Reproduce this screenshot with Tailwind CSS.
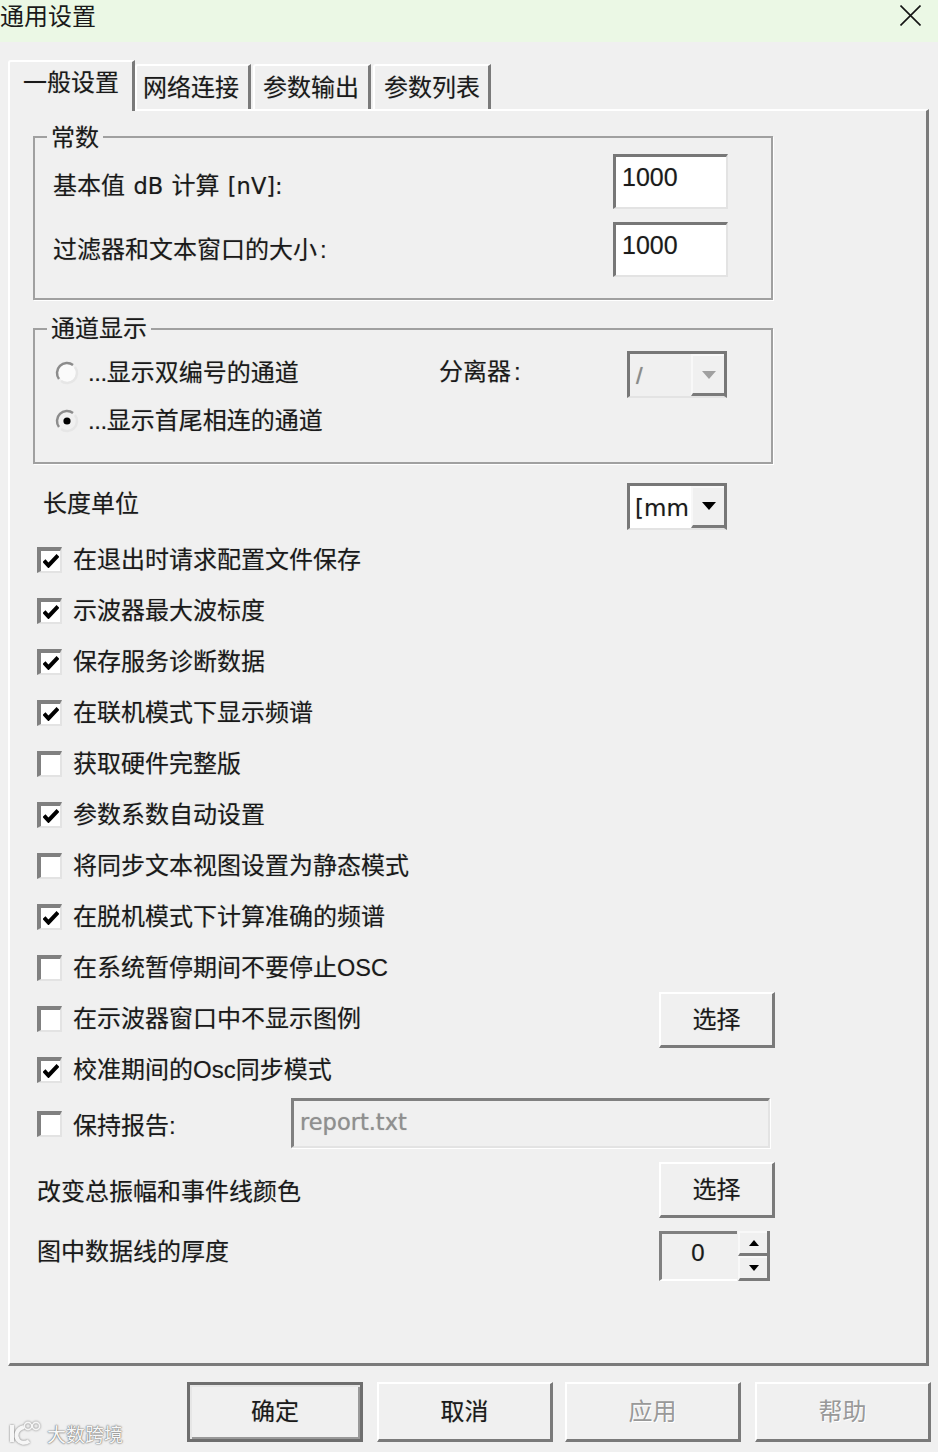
<!DOCTYPE html>
<html lang="zh-CN">
<head>
    <meta charset="UTF-8">
    <meta name="viewport" content="width=device-width, initial-scale=1.0">
    <title>通用设置</title>
    <script src="https://cdn.jsdelivr.net/npm/@tailwindcss/browser@4"></script>
</head>
<body class="bg-[#f0f0f0] text-[#1a1a1a] text-[24px] leading-[30px] font-['Liberation_Sans','Noto_Sans_CJK_SC',sans-serif] [text-shadow:0_0_1px_rgba(0,0,0,0.3)] w-[938px] h-[1452px] overflow-hidden">

    <!-- title bar -->
    <div class="h-[42px] bg-[#ebf8e5] flex items-start justify-between">
        <div class="mt-[2px] [text-shadow:none]">通用设置</div>
        <svg class="mt-[5px] mr-[17px]" width="21" height="21" viewBox="0 0 21 21" fill="none" stroke="#151515" stroke-width="1.6"><path d="M0.5 0.5L20.5 20.5M20.5 0.5L0.5 20.5"/></svg>
    </div>

    <!-- tabs -->
    <div class="flex items-end h-[67px] pl-[8px]">
        <div class="relative z-10 -mb-[2px] w-[127px] h-[51px] pl-[13px] pt-[6px] bg-[#f0f0f0] border-t-2 border-l-2 border-t-white border-l-white border-r-[3px] border-r-[#7a7a7a] rounded-tl-[3px]">一般设置</div>
        <div class="w-[116px] h-[45px] pl-[6px] pt-[7px] border-t-2 border-l-2 border-t-white border-l-white border-r-[3px] border-r-[#7a7a7a] rounded-tl-[3px]">网络连接</div>
        <div class="ml-[2px] w-[118px] h-[45px] pl-[8px] pt-[7px] border-t-2 border-l-2 border-t-white border-l-white border-r-[3px] border-r-[#7a7a7a] rounded-tl-[3px]">参数输出</div>
        <div class="ml-[2px] w-[118px] h-[45px] pl-[9px] pt-[7px] border-t-2 border-l-2 border-t-white border-l-white border-r-[3px] border-r-[#7a7a7a] rounded-tl-[3px]">参数列表</div>
    </div>

    <!-- tab panel -->
    <div class="ml-[8px] w-[921px] h-[1257px] border-t-2 border-l-2 border-t-white border-l-white border-r-[3px] border-b-[3px] border-r-[#7a7a7a] border-b-[#7a7a7a]">

        <!-- 常数 -->
        <div class="relative mt-[25px] ml-[23px] w-[740px] h-[164px] border-2 border-[#a0a0a0] shadow-[1px_1px_0_#fff] pl-[18px] pr-[43px] pt-[16px] flex flex-col gap-[14px]">
            <div class="absolute left-[12px] -top-[15px] px-[4px] bg-[#f0f0f0]">常数</div>
            <div class="flex items-center justify-between h-[54px]">
                <span class="mt-[9px] [word-spacing:1.7px]">基本值 <span class="font-['DejaVu_Sans',sans-serif] text-[22.5px]">dB</span> 计算 <span class="font-['DejaVu_Sans',sans-serif] text-[22.5px]">[nV]:</span></span>
                <div class="w-[115px] h-[55px] bg-white pl-[6px] border-t-[3px] border-l-[3px] border-t-[#777] border-l-[#777] border-r-2 border-b-2 border-r-[#e3e3e3] border-b-[#e3e3e3] text-[25px] leading-[40px]">1000</div>
            </div>
            <div class="flex items-center justify-between h-[54px]">
                <span class="mt-[1px]">过滤器和文本窗口的大小<span class="pl-[3px]">:</span></span>
                <div class="w-[115px] h-[55px] bg-white pl-[6px] border-t-[3px] border-l-[3px] border-t-[#777] border-l-[#777] border-r-2 border-b-2 border-r-[#e3e3e3] border-b-[#e3e3e3] text-[25px] leading-[40px]">1000</div>
            </div>
        </div>

        <!-- 通道显示 -->
        <div class="relative mt-[28px] ml-[23px] w-[740px] h-[136px] border-2 border-[#a0a0a0] shadow-[1px_1px_0_#fff] pl-[20px] pr-[44px] pt-[19px] flex">
            <div class="absolute left-[12px] -top-[16px] px-[4px] bg-[#f0f0f0]">通道显示</div>
            <div class="w-[384px] flex flex-col">
                <div class="flex items-center h-[48px] gap-[9px]">
                    <svg width="24" height="24" viewBox="0 0 24 24" fill="none" stroke-width="2.5"><circle cx="12" cy="12" r="9" fill="#fbfbfb"/><path d="M4 18A10 10 0 0 1 18 4" stroke="#8c8c8c"/><path d="M20 6A10 10 0 0 1 6 20" stroke="#e6e6e6"/></svg>
                    <span><span class="tracking-[-0.4px]">...</span>显示双编号的通道</span>
                </div>
                <div class="flex items-center h-[48px] gap-[9px]">
                    <svg width="24" height="24" viewBox="0 0 24 24" fill="none" stroke-width="2.5"><circle cx="12" cy="12" r="9" fill="#f0f0f0"/><path d="M4 18A10 10 0 0 1 18 4" stroke="#8c8c8c"/><path d="M20 6A10 10 0 0 1 6 20" stroke="#e6e6e6"/><circle cx="12" cy="12" r="3.6" fill="#000"/></svg>
                    <span><span class="tracking-[-0.4px]">...</span>显示首尾相连的通道</span>
                </div>
            </div>
            <div class="flex items-start justify-between flex-1">
                <span class="mt-[8px]">分离器<span class="pl-[3px]">:</span></span>
                <div class="mt-[2px] w-[100px] h-[47px] flex justify-between bg-[#f0f0f0] border-t-[3px] border-l-[3px] border-t-[#777] border-l-[#777] border-r-[3px] border-r-[#777] border-b-2 border-b-[#e3e3e3]">
                    <span class="pl-[6px] pt-[7px] text-[#8a8a8a]">/</span>
                    <div class="w-[33px] h-[42px] flex items-center justify-center border-t-2 border-l-2 border-t-[#f8f8f8] border-l-[#f8f8f8] border-b-[3px] border-b-[#7a7a7a]">
                        <svg width="14" height="8" viewBox="0 0 14 8"><path d="M0 0H14L7 8Z" fill="#a0a0a0"/></svg>
                    </div>
                </div>
            </div>
        </div>

        <!-- options -->
        <div class="ml-[27px] w-[738px]">
            <div class="mt-[19px] h-[46px] flex items-center justify-between pl-[6px] pr-[48px]">
                <span class="-mt-[4px]">长度单位</span>
                <div class="w-[100px] h-[47px] flex justify-between bg-white border-t-[3px] border-l-[3px] border-t-[#777] border-l-[#777] border-r-[3px] border-r-[#777] border-b-2 border-b-[#e3e3e3]">
                    <span class="w-[60px] overflow-hidden pl-[5px] pt-[7px] whitespace-nowrap font-['DejaVu_Sans',sans-serif] text-[23px]">[mm]</span>
                    <div class="w-[33px] h-[42px] bg-[#f0f0f0] flex items-center justify-center border-t-2 border-l-2 border-t-[#f8f8f8] border-l-[#f8f8f8] border-b-[3px] border-b-[#7a7a7a]">
                        <svg width="14" height="8" viewBox="0 0 14 8"><path d="M0 0H14L7 8Z" fill="#000"/></svg>
                    </div>
                </div>
            </div>

            <div class="mt-[5px] flex flex-col">
                <div class="h-[51px] flex items-center gap-[11px]">
                    <div class="w-[25px] h-[26px] bg-white flex items-center justify-center border-t-4 border-l-4 border-t-[#808080] border-l-[#808080] border-r-2 border-b-2 border-r-[#e3e3e3] border-b-[#e3e3e3]"><svg width="16" height="14" viewBox="0 0 16 14"><path d="M1 6.5L5.5 11.5L15 1.5" fill="none" stroke="#000" stroke-width="4"/></svg></div>
                    <span>在退出时请求配置文件保存</span>
                </div>
                <div class="h-[51px] flex items-center gap-[11px]">
                    <div class="w-[25px] h-[26px] bg-white flex items-center justify-center border-t-4 border-l-4 border-t-[#808080] border-l-[#808080] border-r-2 border-b-2 border-r-[#e3e3e3] border-b-[#e3e3e3]"><svg width="16" height="14" viewBox="0 0 16 14"><path d="M1 6.5L5.5 11.5L15 1.5" fill="none" stroke="#000" stroke-width="4"/></svg></div>
                    <span>示波器最大波标度</span>
                </div>
                <div class="h-[51px] flex items-center gap-[11px]">
                    <div class="w-[25px] h-[26px] bg-white flex items-center justify-center border-t-4 border-l-4 border-t-[#808080] border-l-[#808080] border-r-2 border-b-2 border-r-[#e3e3e3] border-b-[#e3e3e3]"><svg width="16" height="14" viewBox="0 0 16 14"><path d="M1 6.5L5.5 11.5L15 1.5" fill="none" stroke="#000" stroke-width="4"/></svg></div>
                    <span>保存服务诊断数据</span>
                </div>
                <div class="h-[51px] flex items-center gap-[11px]">
                    <div class="w-[25px] h-[26px] bg-white flex items-center justify-center border-t-4 border-l-4 border-t-[#808080] border-l-[#808080] border-r-2 border-b-2 border-r-[#e3e3e3] border-b-[#e3e3e3]"><svg width="16" height="14" viewBox="0 0 16 14"><path d="M1 6.5L5.5 11.5L15 1.5" fill="none" stroke="#000" stroke-width="4"/></svg></div>
                    <span>在联机模式下显示频谱</span>
                </div>
                <div class="h-[51px] flex items-center gap-[11px]">
                    <div class="w-[25px] h-[26px] bg-white border-t-4 border-l-4 border-t-[#808080] border-l-[#808080] border-r-2 border-b-2 border-r-[#e3e3e3] border-b-[#e3e3e3]"></div>
                    <span>获取硬件完整版</span>
                </div>
                <div class="h-[51px] flex items-center gap-[11px]">
                    <div class="w-[25px] h-[26px] bg-white flex items-center justify-center border-t-4 border-l-4 border-t-[#808080] border-l-[#808080] border-r-2 border-b-2 border-r-[#e3e3e3] border-b-[#e3e3e3]"><svg width="16" height="14" viewBox="0 0 16 14"><path d="M1 6.5L5.5 11.5L15 1.5" fill="none" stroke="#000" stroke-width="4"/></svg></div>
                    <span>参数系数自动设置</span>
                </div>
                <div class="h-[51px] flex items-center gap-[11px]">
                    <div class="w-[25px] h-[26px] bg-white border-t-4 border-l-4 border-t-[#808080] border-l-[#808080] border-r-2 border-b-2 border-r-[#e3e3e3] border-b-[#e3e3e3]"></div>
                    <span>将同步文本视图设置为静态模式</span>
                </div>
                <div class="h-[51px] flex items-center gap-[11px]">
                    <div class="w-[25px] h-[26px] bg-white flex items-center justify-center border-t-4 border-l-4 border-t-[#808080] border-l-[#808080] border-r-2 border-b-2 border-r-[#e3e3e3] border-b-[#e3e3e3]"><svg width="16" height="14" viewBox="0 0 16 14"><path d="M1 6.5L5.5 11.5L15 1.5" fill="none" stroke="#000" stroke-width="4"/></svg></div>
                    <span>在脱机模式下计算准确的频谱</span>
                </div>
                <div class="h-[51px] flex items-center gap-[11px]">
                    <div class="w-[25px] h-[26px] bg-white border-t-4 border-l-4 border-t-[#808080] border-l-[#808080] border-r-2 border-b-2 border-r-[#e3e3e3] border-b-[#e3e3e3]"></div>
                    <span>在系统暂停期间不要停止<span class="text-[23.5px]">OSC</span></span>
                </div>
                <div class="h-[51px] flex items-center gap-[11px]">
                    <div class="w-[25px] h-[26px] bg-white border-t-4 border-l-4 border-t-[#808080] border-l-[#808080] border-r-2 border-b-2 border-r-[#e3e3e3] border-b-[#e3e3e3]"></div>
                    <span>在示波器窗口中不显示图例</span>
                    <div class="ml-auto self-start -mt-[1px] w-[116px] h-[56px] shrink-0 flex items-center justify-center border-t-2 border-l-2 border-t-white border-l-white border-r-[3px] border-b-[3px] border-r-[#7a7a7a] border-b-[#7a7a7a]">选择</div>
                </div>
                <div class="h-[51px] flex items-center gap-[11px]">
                    <div class="w-[25px] h-[26px] bg-white flex items-center justify-center border-t-4 border-l-4 border-t-[#808080] border-l-[#808080] border-r-2 border-b-2 border-r-[#e3e3e3] border-b-[#e3e3e3]"><svg width="16" height="14" viewBox="0 0 16 14"><path d="M1 6.5L5.5 11.5L15 1.5" fill="none" stroke="#000" stroke-width="4"/></svg></div>
                    <span>校准期间的Osc同步模式</span>
                </div>
            </div>

            <div class="mt-[3px] h-[50px] flex items-center">
                <div class="mt-[2px] w-[25px] h-[26px] bg-white border-t-4 border-l-4 border-t-[#808080] border-l-[#808080] border-r-2 border-b-2 border-r-[#e3e3e3] border-b-[#e3e3e3]"></div>
                <span class="ml-[11px] mt-[5px]">保持报告:</span>
                <div class="ml-auto mr-[5px] w-[479px] h-[50px] pl-[6px] text-[#8f8f8f] font-['DejaVu_Sans',sans-serif] text-[22.5px] leading-[42px] border-t-[3px] border-l-[3px] border-t-[#808080] border-l-[#808080] border-r-2 border-b-2 border-r-[#e3e3e3] border-b-[#e3e3e3] shadow-[1px_1px_0_#fff]">report.txt</div>
            </div>

            <div class="mt-[14px] h-[56px] flex items-center justify-between">
                <span class="mt-[3px]">改变总振幅和事件线颜色</span>
                <div class="w-[116px] h-[56px] flex items-center justify-center border-t-2 border-l-2 border-t-white border-l-white border-r-[3px] border-b-[3px] border-r-[#7a7a7a] border-b-[#7a7a7a]">选择</div>
            </div>

            <div class="mt-[13px] h-[50px] flex items-center justify-between pr-[5px]">
                <span class="-mt-[8px]">图中数据线的厚度</span>
                <div class="flex h-[50px]">
                    <div class="w-[78px] h-[50px] flex items-center justify-center pr-[3px] pb-[7px] border-t-[3px] border-l-[3px] border-t-[#808080] border-l-[#808080] border-b-2 border-b-white">0</div>
                    <div class="ml-[1px] w-[32px] flex flex-col border-r-[3px] border-r-[#7a7a7a]">
                        <div class="h-[25px] flex items-center justify-center border-t-2 border-l-2 border-t-[#f8f8f8] border-l-[#f8f8f8] border-b-[3px] border-b-[#7a7a7a]"><svg width="10" height="6" viewBox="0 0 10 6"><path d="M5 0L10 6H0Z" fill="#000"/></svg></div>
                        <div class="h-[25px] flex items-center justify-center border-t-2 border-l-2 border-t-[#f8f8f8] border-l-[#f8f8f8] border-b-[3px] border-b-[#7a7a7a]"><svg width="10" height="6" viewBox="0 0 10 6"><path d="M0 0H10L5 6Z" fill="#000"/></svg></div>
                    </div>
                </div>
            </div>
        </div>
    </div>

    <!-- footer -->
    <div class="mt-[16px] flex items-start">
        <div class="w-[179px] ml-[8px] h-[60px] flex items-end gap-[5px]">
            <svg class="-mb-[4px] drop-shadow-[0_0_1px_#777]" width="34" height="26" viewBox="0 0 34 26" fill="none" stroke="#f6f6f6"><path d="M4 5V22" stroke-width="4"/><path d="M16 7C8 9 7 16 10 20C12 23 17 24 21 21" stroke-width="4"/><circle cx="20" cy="6" r="3.6" stroke-width="1.6"/><circle cx="28" cy="6" r="3.6" stroke-width="1.6"/></svg>
            <span class="-mb-[7px] text-[19px] leading-[26px] text-[#f7f7f7] [text-shadow:0_0_2px_#666,0_0_1px_#666]">大数跨境</span>
        </div>
        <div class="w-[176px] h-[60px] flex items-center justify-center border-[3px] border-[#6e6e6e] shadow-[inset_2px_2px_0_#e6e6e6,inset_-2px_-2px_0_#999]">确定</div>
        <div class="ml-[14px] w-[176px] h-[60px] flex items-center justify-center border-t-2 border-l-2 border-t-white border-l-white border-r-[3px] border-b-[3px] border-r-[#7a7a7a] border-b-[#7a7a7a]">取消</div>
        <div class="ml-[12px] w-[176px] h-[60px] flex items-center justify-center text-[#999] [text-shadow:1px_1px_0_#fff] border-t-2 border-l-2 border-t-white border-l-white border-r-[3px] border-b-[3px] border-r-[#7a7a7a] border-b-[#7a7a7a]">应用</div>
        <div class="ml-[14px] w-[176px] h-[60px] flex items-center justify-center text-[#999] [text-shadow:1px_1px_0_#fff] border-t-2 border-l-2 border-t-white border-l-white border-r-[3px] border-b-[3px] border-r-[#7a7a7a] border-b-[#7a7a7a]">帮助</div>
    </div>
</body>
</html>
